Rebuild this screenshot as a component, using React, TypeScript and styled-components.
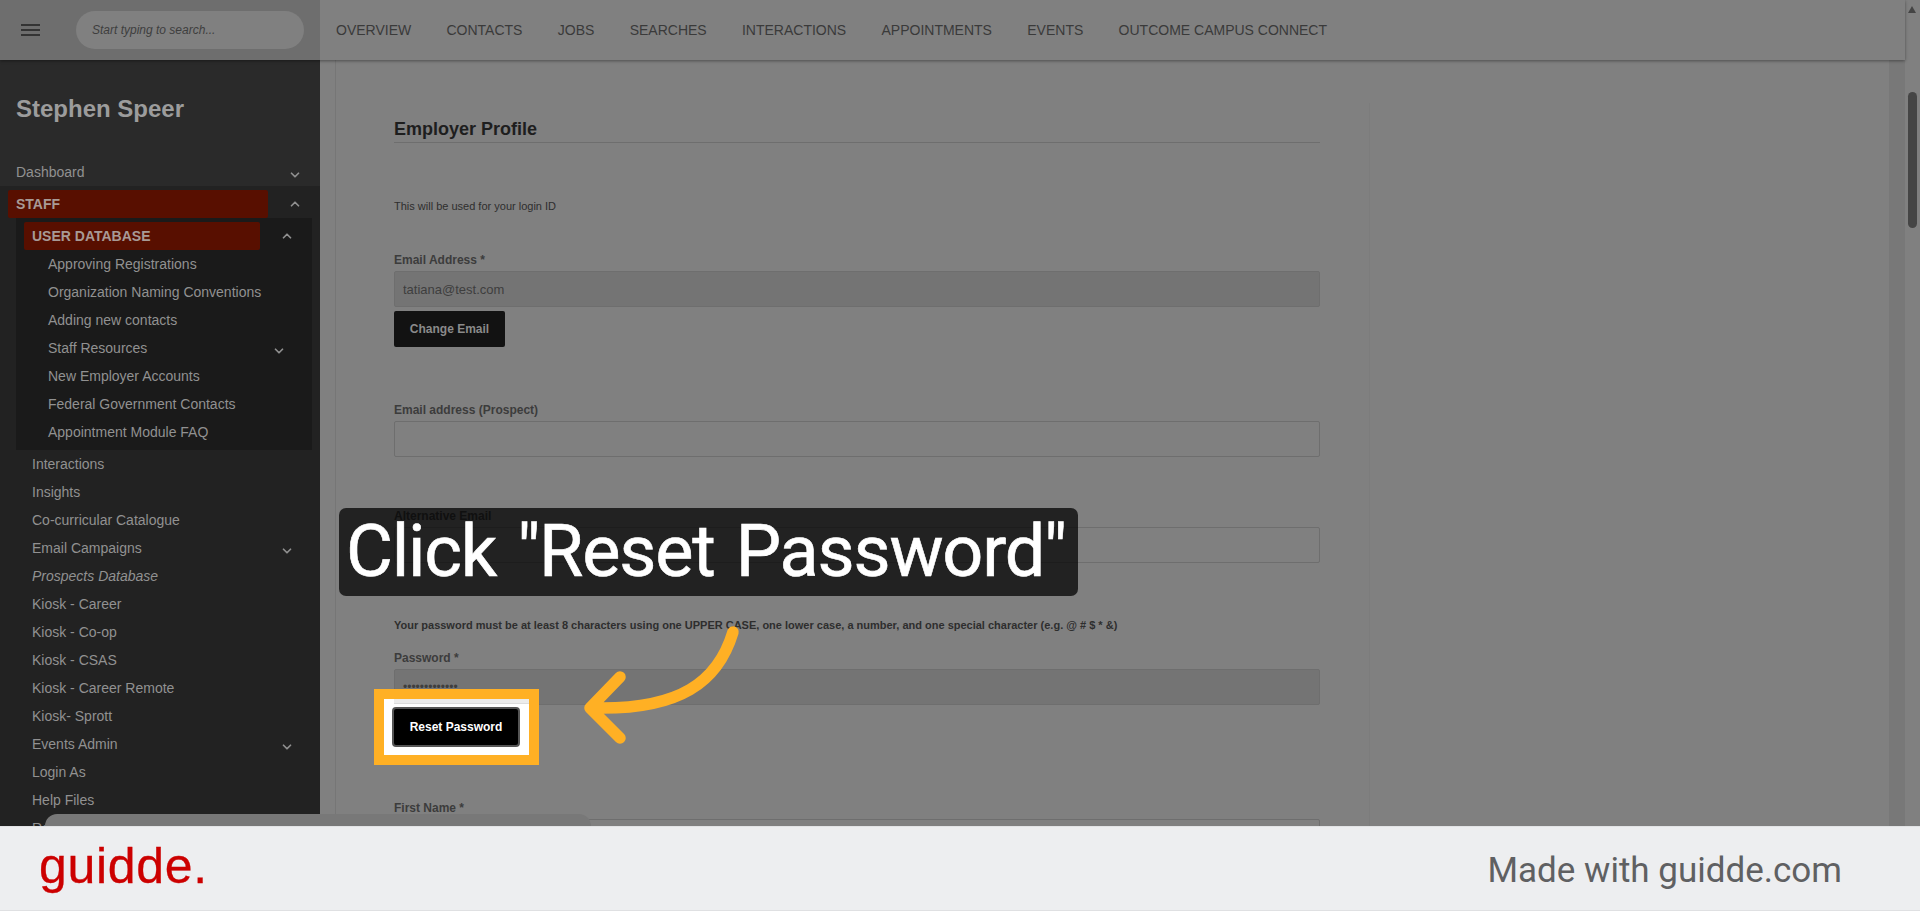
import React from "react";
import styled, { createGlobalStyle } from "styled-components";
import { ChevronDown, ChevronUp } from "lucide-react";

const Global = createGlobalStyle`
  html, body { margin: 0; padding: 0; background: #808080; overflow: hidden; }
  * { box-sizing: border-box; }
`;

const Screen = styled.div`
  position: relative;
  width: 1920px;
  height: 911px;
  display: flex;
  flex-direction: column;
  overflow: hidden;
  font-family: "Liberation Sans", Arial, sans-serif;
  background: #808080;
`;
const Viewport = styled.div`
  flex: 1;
  min-height: 0;
  display: flex;
`;
const AppColumn = styled.div`
  flex: 1;
  min-width: 0;
  display: flex;
  flex-direction: column;
`;
const TopBar = styled.header`
  height: 60px;
  flex: none;
  display: flex;
  background: #808080;
  box-shadow: 0 1px 3px rgba(0, 0, 0, 0.4);
  position: relative;
  z-index: 2;
`;
const TopLeft = styled.div`
  width: 320px;
  flex: none;
  display: flex;
  align-items: center;
  gap: 36px;
  padding-left: 21px;
  background: #6e6e6e;
`;
const Burger = styled.svg`
  width: 19px;
  height: 12px;
  flex: none;
`;
const SearchPill = styled.div`
  width: 228px;
  height: 38px;
  border-radius: 19px;
  background: #808080;
  display: flex;
  align-items: center;
  padding-left: 16px;
  font: italic 12px "Liberation Sans", Arial, sans-serif;
  color: #3e3e3e;
`;
const Nav = styled.nav`
  display: flex;
  align-items: center;
  gap: 35.3px;
  padding-left: 16px;
`;
const NavItem = styled.span`
  font: 400 14px "Liberation Sans", Arial, sans-serif;
  color: #3a3a3a;
  white-space: nowrap;
`;
const Below = styled.div`
  flex: 1;
  min-height: 0;
  display: flex;
`;
const Sidebar = styled.aside`
  width: 320px;
  flex: none;
  background: #2a2a2a;
  overflow: hidden;
  display: flex;
  flex-direction: column;
`;
const UserName = styled.h2`
  margin: 0;
  padding: 35px 0 35px 16px;
  height: 98px;
  font-size: 24px;
  line-height: 28px;
  font-weight: 700;
  color: #9c9c9c;
`;
const Row = styled.div<{ $left?: number; $right?: number; $italic?: boolean }>`
  height: 28px;
  flex: none;
  display: flex;
  align-items: center;
  justify-content: space-between;
  padding-left: ${(p) => p.$left ?? 32}px;
  padding-right: ${(p) => p.$right ?? 26}px;
  font-size: 14px;
  color: #919191;
  font-style: ${(p) => (p.$italic ? "italic" : "normal")};
  white-space: nowrap;
`;
const DownIcon = styled(ChevronDown)`
  width: 14px;
  height: 14px;
  margin-top: 6px;
  color: #8f8f8f;
  stroke-width: 3;
`;
const UpIcon = styled(ChevronUp)`
  width: 14px;
  height: 14px;
  color: #8f8f8f;
  stroke-width: 3;
`;
const StaffGroup = styled.div`
  flex: 1;
  background: #222222;
  padding-top: 4px;
`;
const ActiveRow = styled.div<{ $inset: number; $right: number }>`
  height: 28px;
  display: flex;
  align-items: center;
  justify-content: space-between;
  padding-left: ${(p) => p.$inset}px;
  padding-right: ${(p) => p.$right}px;
`;
const ActiveLabel = styled.div<{ $width: number }>`
  width: ${(p) => p.$width}px;
  height: 28px;
  line-height: 28px;
  padding-left: 8px;
  background: #580f00;
  border-radius: 2px;
  font-size: 14px;
  font-weight: 700;
  color: #a89a96;
`;
const SubGroup = styled.div`
  margin: 0 8px 0 16px;
  padding: 4px 0;
  background: #1a1a1a;
`;
const FooterPill = styled.div`
  position: absolute;
  left: 45px;
  top: 814px;
  width: 546px;
  height: 12px;
  background: #787878;
  border-radius: 22px 22px 0 0;
  z-index: 3;
`;
const Main = styled.main`
  flex: 1;
  min-width: 0;
  display: flex;
  padding-left: 15px;
  overflow: hidden;
`;
const Panel = styled.section`
  flex: 1;
  min-width: 0;
  border-left: 1px solid #767676;
  padding-left: 58px;
  overflow: hidden;
`;
const RightGutter = styled.div`
  width: 16px;
  flex: none;
  background: #787878;
`;
const FormColumn = styled.div`
  width: 976px;
  margin-top: 43px;
  border-right: 1px solid #7c7c7c;
  min-height: 100%;
`;
const Form = styled.div`
  width: 926px;
  display: flex;
  flex-direction: column;
`;
const Heading = styled.h3`
  margin: 9px 0 0;
  height: 31px;
  line-height: 34px;
  font-size: 18px;
  font-weight: 700;
  color: #1e1e1e;
  border-bottom: 1px solid #6e6e6e;
`;
const Note = styled.p<{ $top: number; $bold?: boolean }>`
  margin: ${(p) => p.$top}px 0 0;
  height: 16px;
  line-height: 16px;
  font-size: 11px;
  font-weight: ${(p) => (p.$bold ? 700 : 400)};
  color: #2e2e2e;
  white-space: nowrap;
`;
const Label = styled.label<{ $top: number }>`
  display: block;
  margin-top: ${(p) => p.$top}px;
  height: 16px;
  line-height: 16px;
  font-size: 12px;
  font-weight: 700;
  color: #3c3c3c;
`;
const Field = styled.input<{ $disabled?: boolean; $size?: number }>`
  display: block;
  width: 100%;
  height: 36px;
  flex: none;
  margin-top: 3px;
  padding: 0 8px;
  border: 1px solid #6e6e6e;
  border-radius: 2px;
  outline: none;
  background: ${(p) => (p.$disabled ? "#747474" : "#808080")};
  font: ${(p) => p.$size ?? 13}px "Liberation Sans", Arial, sans-serif;
  color: #3e3e3e;
`;
const DarkButton = styled.button`
  margin-top: 4px;
  width: 111px;
  height: 36px;
  background: #121212;
  border: none;
  border-radius: 2px;
  font: 700 12px "Liberation Sans", Arial, sans-serif;
  color: #8a8a8a;
`;
const Scrollbar = styled.div`
  width: 15px;
  flex: none;
  position: relative;
  background: #808080;
`;
const ScrollArrow = styled.div`
  position: absolute;
  left: 3px;
  top: 6px;
  width: 0;
  height: 0;
  border-left: 4.5px solid transparent;
  border-right: 4.5px solid transparent;
  border-bottom: 7px solid #444;
`;
const ScrollThumb = styled.div`
  position: absolute;
  left: 3px;
  top: 92px;
  width: 9px;
  height: 136px;
  background: #454545;
  border-radius: 5px;
`;
const Footer = styled.footer`
  height: 85px;
  flex: none;
  display: flex;
  align-items: center;
  justify-content: space-between;
  padding: 0 78px 0 39px;
  background: #edeef0;
  border-top: 1px solid #e2e3e5;
  border-bottom: 1px solid #dfe0e2;
  position: relative;
  z-index: 4;
`;
const Logo = styled.span`
  font: 400 50px/1 "Liberation Sans", Arial, sans-serif;
  color: #cc0000;
  letter-spacing: 0.7px;
  margin-top: -5px;
  -webkit-text-stroke: 0.3px #cc0000;
`;
const Made = styled.span`
  font: 400 35px Roboto, sans-serif;
  color: #5f6062;
  margin-top: 3px;
`;
const Caption = styled.div`
  position: absolute;
  left: 339px;
  top: 508px;
  width: 739px;
  height: 88px;
  border-radius: 7px;
  background: rgba(0, 0, 0, 0.735);
  color: #fff;
  font: 400 72px/88px Roboto, sans-serif;
  letter-spacing: -1.2px;
  word-spacing: 4.5px;
  -webkit-text-stroke: 0.6px #fff;
  padding-left: 7px;
  white-space: nowrap;
  z-index: 5;
`;
const Highlight = styled.div`
  position: absolute;
  left: 374px;
  top: 689px;
  width: 165px;
  height: 76px;
  border: 10px solid #ffb024;
  background: #fff;
  padding: 8px 0 0 8px;
  z-index: 5;
`;
const InputSliver = styled.div`
  position: absolute;
  left: 10px;
  right: 0;
  top: 0;
  height: 5px;
  background: #ececec;
  border-bottom: 1px solid #dcdcdc;
`;
const ResetButton = styled.button`
  display: block;
  width: 128px;
  height: 40px;
  background: #000;
  border: 2px solid #555;
  border-radius: 4px;
  font: 700 12px "Liberation Sans", Arial, sans-serif;
  color: #fff;
`;
const Arrow = styled.svg`
  position: absolute;
  left: 570px;
  top: 620px;
  width: 180px;
  height: 130px;
  z-index: 6;
`;

const navItems = ["OVERVIEW", "CONTACTS", "JOBS", "SEARCHES", "INTERACTIONS", "APPOINTMENTS", "EVENTS", "OUTCOME CAMPUS CONNECT"];
const subItems: [string, boolean][] = [
  ["Approving Registrations", false],
  ["Organization Naming Conventions", false],
  ["Adding new contacts", false],
  ["Staff Resources", true],
  ["New Employer Accounts", false],
  ["Federal Government Contacts", false],
  ["Appointment Module FAQ", false],
];
const mainItems: [string, boolean, boolean?][] = [
  ["Interactions", false],
  ["Insights", false],
  ["Co-curricular Catalogue", false],
  ["Email Campaigns", true],
  ["Prospects Database", false, true],
  ["Kiosk - Career", false],
  ["Kiosk - Co-op", false],
  ["Kiosk - CSAS", false],
  ["Kiosk - Career Remote", false],
  ["Kiosk- Sprott", false],
  ["Events Admin", true],
  ["Login As", false],
  ["Help Files", false],
  ["Reports", false],
];

export default function App() {
  return (
    <Screen>
      <Global />
      <Viewport>
        <AppColumn>
          <TopBar>
            <TopLeft>
              <Burger viewBox="0 0 19 12">
                <path d="M0 1h19M0 6h19M0 11h19" stroke="#222" strokeWidth="1.6" />
              </Burger>
              <SearchPill>Start typing to search...</SearchPill>
            </TopLeft>
            <Nav>
              {navItems.map((n) => (
                <NavItem key={n}>{n}</NavItem>
              ))}
            </Nav>
          </TopBar>
          <Below>
            <Sidebar>
              <UserName>Stephen Speer</UserName>
              <Row $left={16} $right={18}>
                Dashboard
                <DownIcon />
              </Row>
              <StaffGroup>
                <ActiveRow $inset={8} $right={18}>
                  <ActiveLabel $width={260}>STAFF</ActiveLabel>
                  <UpIcon />
                </ActiveRow>
                <SubGroup>
                  <ActiveRow $inset={8} $right={18}>
                    <ActiveLabel $width={236}>USER DATABASE</ActiveLabel>
                    <UpIcon />
                  </ActiveRow>
                  {subItems.map(([t, c]) => (
                    <Row key={t} $left={32} $right={26}>
                      {t}
                      {c && <DownIcon />}
                    </Row>
                  ))}
                </SubGroup>
                {mainItems.map(([t, c, i]) => (
                  <Row key={t} $italic={i}>
                    {t}
                    {c && <DownIcon />}
                  </Row>
                ))}
              </StaffGroup>
            </Sidebar>
            <Main>
              <Panel>
                <FormColumn>
                  <Form>
                    <Heading>Employer Profile</Heading>
                    <Note $top={55}>This will be used for your login ID</Note>
                    <Label $top={38}>Email Address *</Label>
                    <Field $disabled readOnly defaultValue="tatiana@test.com" />
                    <DarkButton>Change Email</DarkButton>
                    <Label $top={55}>Email address (Prospect)</Label>
                    <Field readOnly />
                    <Label $top={51}>Alternative Email</Label>
                    <Field readOnly />
                    <Note $top={54} $bold>
                      Your password must be at least 8 characters using one UPPER CASE, one lower case, a number, and one special character (e.g. @ # $ * &amp;)
                    </Note>
                    <Label $top={17}>Password *</Label>
                    <Field $disabled $size={12} readOnly type="password" defaultValue="aaaaaaaaaaaaa" />
                    <Label $top={95}>First Name *</Label>
                    <Field readOnly />
                  </Form>
                </FormColumn>
              </Panel>
              <RightGutter />
            </Main>
          </Below>
        </AppColumn>
        <Scrollbar>
          <ScrollArrow />
          <ScrollThumb />
        </Scrollbar>
      </Viewport>
      <Footer>
        <Logo>guidde.</Logo>
        <Made>Made with guidde.com</Made>
      </Footer>
      <FooterPill />
      <Caption>Click "Reset Password"</Caption>
      <Highlight>
        <InputSliver />
        <ResetButton>Reset Password</ResetButton>
      </Highlight>
      <Arrow viewBox="570 620 180 130">
        <path
          d="M733 632C718 682 680 710 594 708M620 677L590 708L620 738"
          fill="none"
          stroke="#ffb024"
          strokeWidth="11.5"
          strokeLinecap="round"
          strokeLinejoin="round"
        />
      </Arrow>
    </Screen>
  );
}
